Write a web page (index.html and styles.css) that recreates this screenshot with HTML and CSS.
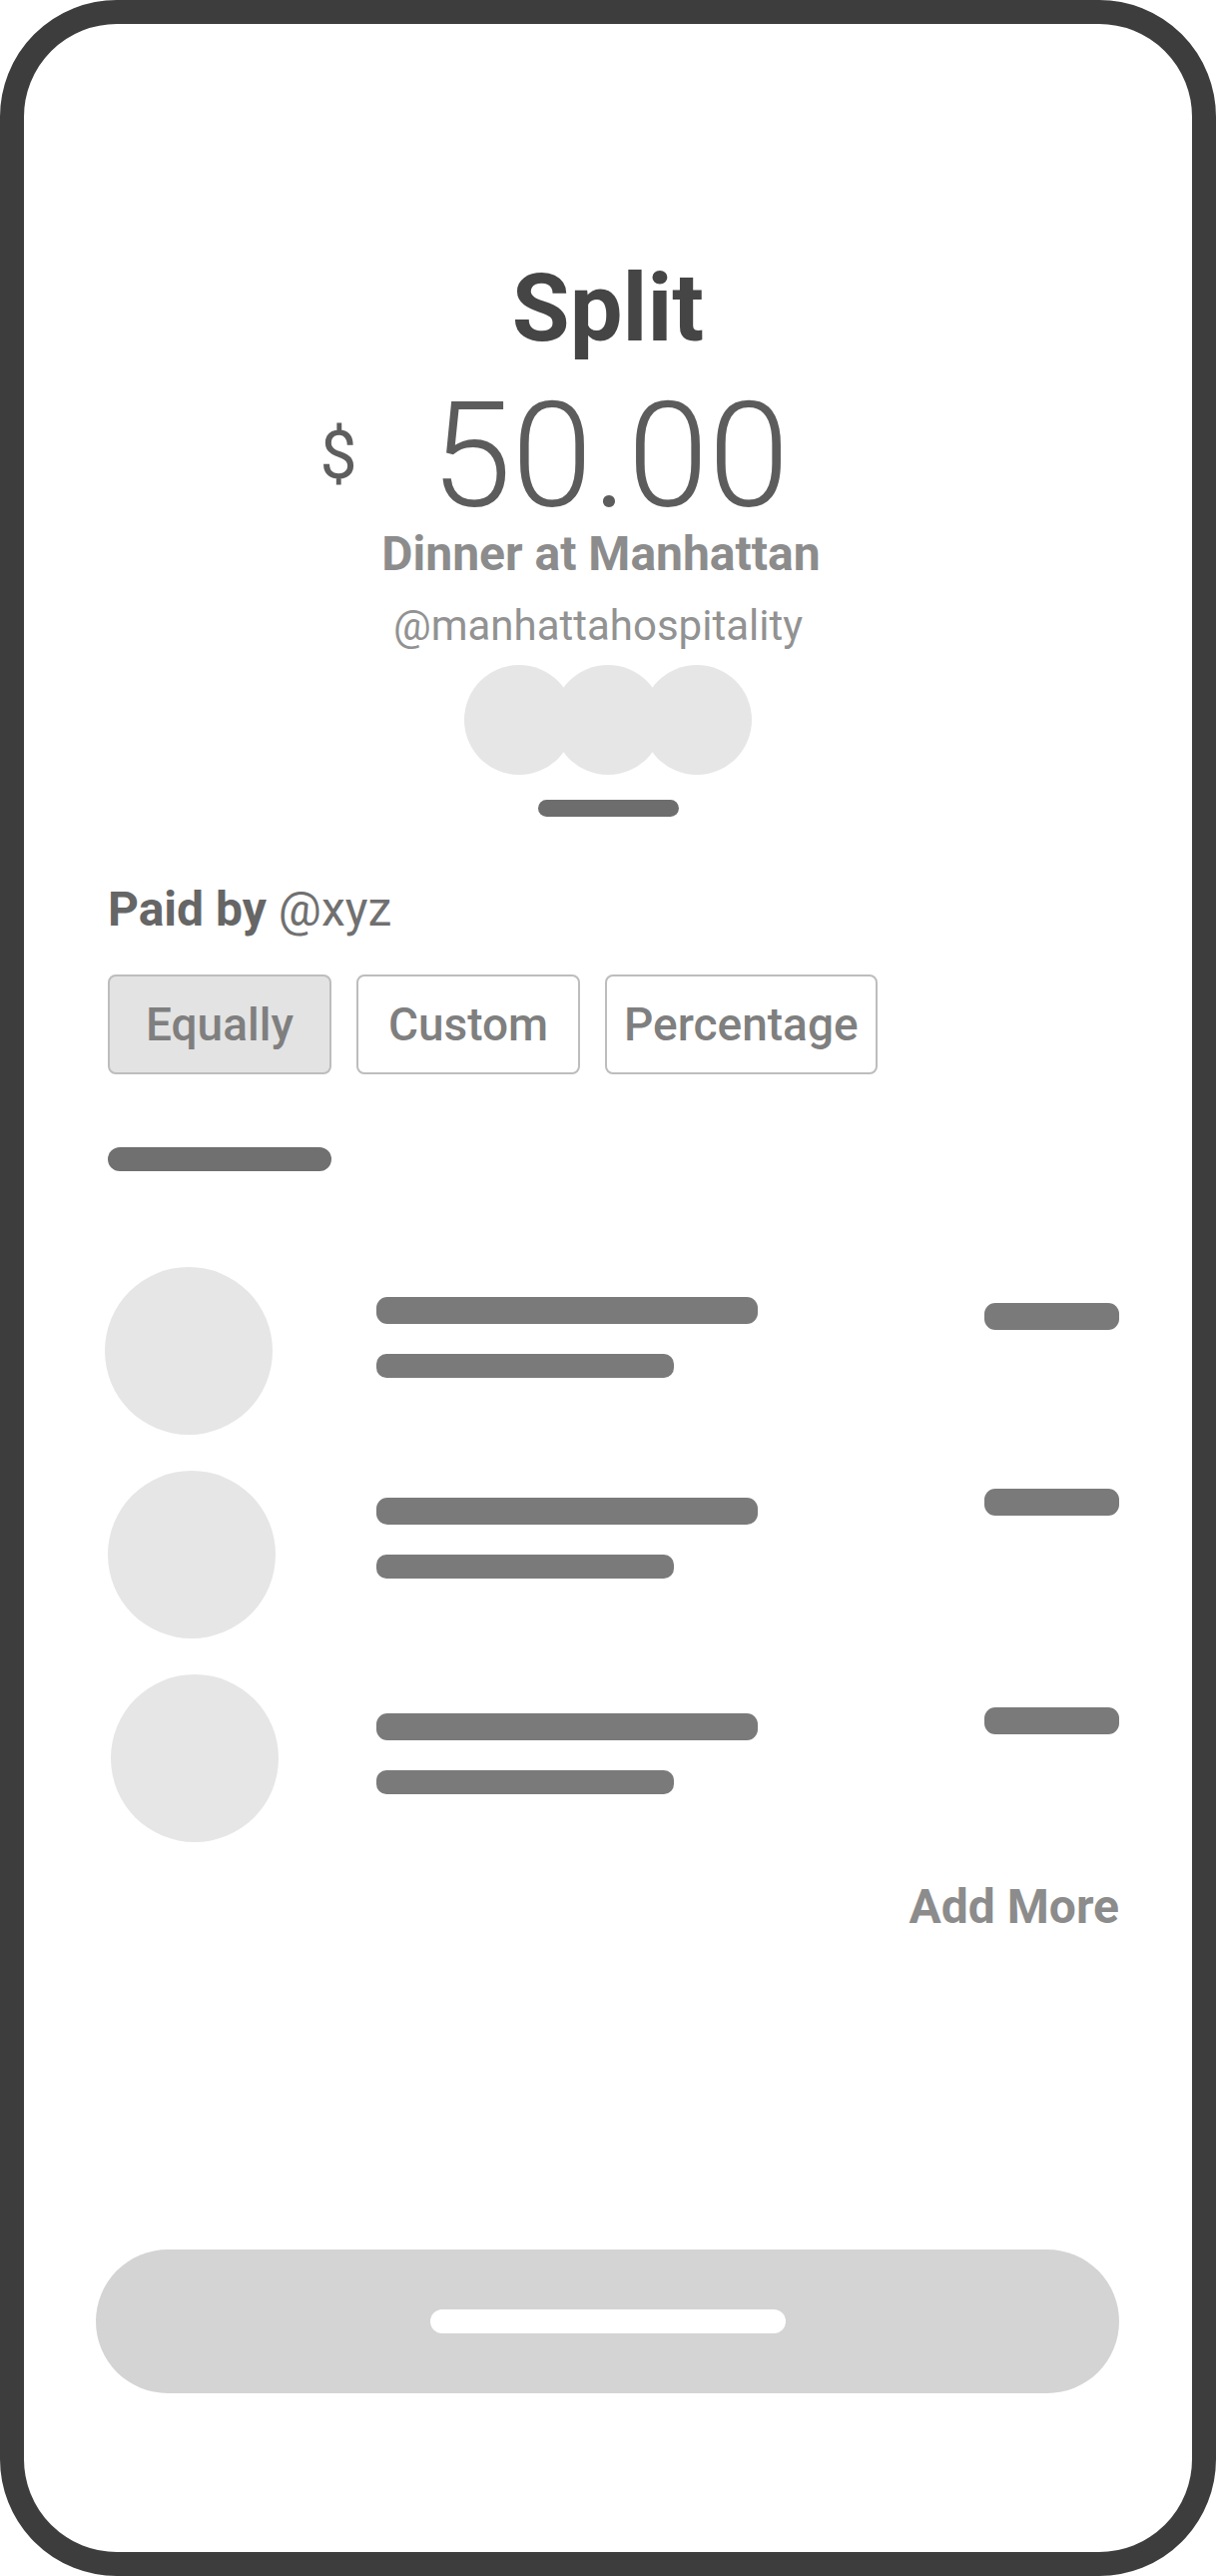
FILE: index.html
```html
<!DOCTYPE html>
<html lang="en">
<head>
<meta charset="utf-8">
<title>Split</title>
<link rel="stylesheet" href="styles.css">
</head>
<body>
<div class="phone">
  <header class="summary">
    <h1 class="title">Split</h1>
    <div class="amount-row">
      <span class="currency">$</span>
      <span class="amount">50.00</span>
      <span class="amount-spacer"></span>
    </div>
    <div class="merchant">Dinner at Manhattan</div>
    <div class="handle">@manhattahospitality</div>
    <div class="participants">
      <span class="participant"></span>
      <span class="participant"></span>
      <span class="participant"></span>
    </div>
    <div class="skeleton summary-bar"></div>
  </header>

  <section class="split-body">
    <p class="paid-by"><strong>Paid by</strong> @xyz</p>
    <div class="tabs">
      <button class="tab tab--active">Equally</button>
      <button class="tab">Custom</button>
      <button class="tab">Percentage</button>
    </div>
    <div class="skeleton section-bar"></div>

    <ul class="people">
      <li class="person">
        <div class="avatar-slot"><span class="avatar"></span></div>
        <div class="lines"><span class="skeleton line-long"></span><span class="skeleton line-short"></span></div>
        <span class="skeleton share"></span>
      </li>
      <li class="person">
        <div class="avatar-slot"><span class="avatar"></span></div>
        <div class="lines"><span class="skeleton line-long"></span><span class="skeleton line-short"></span></div>
        <span class="skeleton share"></span>
      </li>
      <li class="person">
        <div class="avatar-slot"><span class="avatar"></span></div>
        <div class="lines"><span class="skeleton line-long"></span><span class="skeleton line-short"></span></div>
        <span class="skeleton share"></span>
      </li>
    </ul>

    <div class="add-more">Add More</div>
  </section>

  <button class="cta"><span class="cta-bar"></span></button>
</div>
</body>
</html>
```

FILE: styles.css
```css
* {
  box-sizing: border-box;
}

html, body {
  margin: 0;
  padding: 0;
  background: #ffffff;
}

body {
  font-family: Roboto, "Liberation Sans", sans-serif;
}

.phone {
  width: 1218px;
  height: 2580px;
  border: 24px solid #3d3d3d;
  border-radius: 117px;
  background: #ffffff;
  display: flex;
  flex-direction: column;
  overflow: hidden;
}

/* ---------- summary ---------- */
.summary {
  padding-top: 240px;
  display: flex;
  flex-direction: column;
  align-items: center;
}

.title {
  margin: 0;
  font-size: 94px;
  line-height: 90px;
  font-weight: 700;
  color: #454545;
}

.amount-row {
  margin-top: 45px;
  width: 100%;
  display: grid;
  grid-template-columns: 1fr auto 1fr;
  align-items: start;
}

.currency {
  justify-self: end;
  margin-right: 70px;
  margin-top: 28px;
  font-size: 66px;
  line-height: 60px;
  font-weight: 400;
  color: #5e5e5e;
}

.amount {
  margin-left: 4px;
  font-size: 146px;
  line-height: 118px;
  font-weight: 300;
  color: #5c5c5c;
}

.merchant {
  margin-top: 12px;
  margin-right: 14px;
  font-size: 48px;
  line-height: 52px;
  font-weight: 700;
  color: #8c8c8c;
}

.handle {
  margin-top: 22px;
  margin-right: 20px;
  font-size: 42px;
  line-height: 48px;
  font-weight: 400;
  color: #929292;
}

.participants {
  margin-top: 15px;
  display: flex;
}

.participant {
  width: 110px;
  height: 110px;
  border-radius: 50%;
  background: #e6e6e6;
}

.participant + .participant {
  margin-left: -21px;
}

.skeleton {
  display: block;
  background: #7a7a7a;
}

.summary-bar {
  margin-top: 25px;
  width: 141px;
  height: 17px;
  border-radius: 9px;
  background: #6d6d6d;
}

/* ---------- body ---------- */
.split-body {
  padding: 0 73px 0 84px;
  display: flex;
  flex-direction: column;
}

.paid-by {
  margin: 65px 0 0;
  font-size: 48px;
  line-height: 56px;
  font-weight: 400;
  color: #707070;
}

.paid-by strong {
  font-weight: 700;
  color: #666666;
}

.tabs {
  margin-top: 37px;
  display: flex;
  gap: 25px;
}

.tab {
  height: 100px;
  min-width: 224px;
  padding: 0 17px;
  border: 2px solid #bdbdbd;
  border-radius: 8px;
  background: #ffffff;
  font-family: Roboto, "Liberation Sans", sans-serif;
  font-size: 46px;
  font-weight: 500;
  color: #7f7f7f;
}

.tab--active {
  background: #e3e3e3;
}

.section-bar {
  margin-top: 73px;
  width: 224px;
  height: 24px;
  border-radius: 12px;
  background: #707070;
}

.people {
  list-style: none;
  margin: 96px 0 0;
  padding: 0;
  display: flex;
  flex-direction: column;
  gap: 36px;
}

.person {
  height: 168px;
  display: flex;
  align-items: flex-start;
}

.avatar-slot {
  width: 269px;
  flex: none;
}

.avatar {
  display: block;
  width: 168px;
  height: 168px;
  border-radius: 50%;
  background: #e6e6e6;
}

.person:nth-child(1) .avatar { margin-left: -3px; }
.person:nth-child(2) .avatar { margin-left: 0; }
.person:nth-child(3) .avatar { margin-left: 3px; }

.lines {
  display: flex;
  flex-direction: column;
  gap: 30px;
}

.person:nth-child(1) .lines { padding-top: 30px; }
.person:nth-child(2) .lines { padding-top: 27px; }
.person:nth-child(3) .lines { padding-top: 39px; }

.line-long {
  width: 382px;
  height: 27px;
  border-radius: 11px;
}

.line-short {
  width: 298px;
  height: 24px;
  border-radius: 10px;
}

.share {
  margin-left: auto;
  width: 135px;
  height: 27px;
  border-radius: 11px;
}

.person:nth-child(1) .share { margin-top: 36px; }
.person:nth-child(2) .share { margin-top: 18px; }
.person:nth-child(3) .share { margin-top: 33px; }

.add-more {
  margin-top: 37px;
  text-align: right;
  font-size: 48px;
  line-height: 56px;
  font-weight: 700;
  color: #8c8c8c;
}

/* ---------- CTA ---------- */
.cta {
  margin: auto 73px 159px 72px;
  height: 144px;
  border: none;
  border-radius: 72px;
  background: #d4d4d4;
  display: flex;
  align-items: center;
  justify-content: center;
  padding: 0;
}

.cta-bar {
  display: block;
  width: 356px;
  height: 24px;
  border-radius: 12px;
  background: #ffffff;
}
```
